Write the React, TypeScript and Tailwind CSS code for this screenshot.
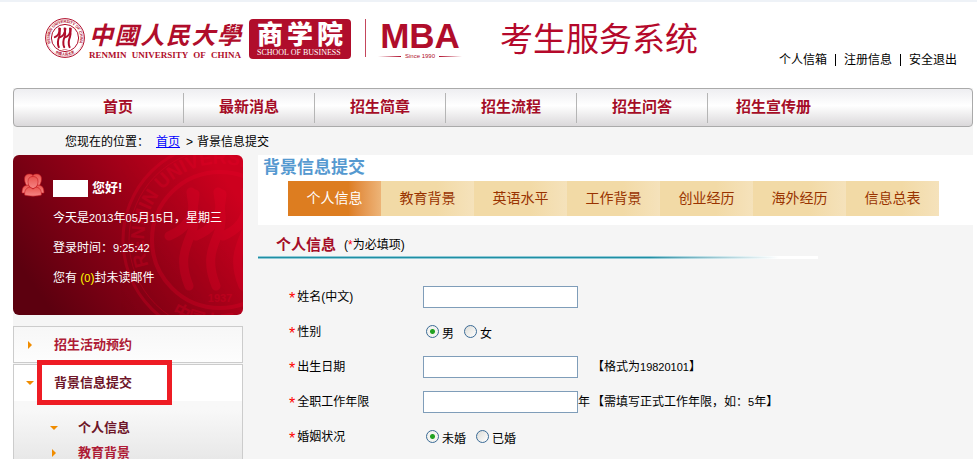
import React from "react";

const navItems = ["首页", "最新消息", "招生简章", "招生流程", "招生问答", "招生宣传册"];

const tabs = [
  "个人信息",
  "教育背景",
  "英语水平",
  "工作背景",
  "创业经历",
  "海外经历",
  "信息总表",
];

// Ring with the three standing figures, shared by the logo and the card
function Seal({ className, id, bold }: { className: string; id: string; bold?: boolean }) {
  const figure = "M-2 -48 C0 -30 4 -20 -2 -6 C-8 8 -14 22 -4 46";
  const arm = "M-24 -4 C-10 -10 0 -18 2 -46";
  return (
    <svg viewBox="-100 -100 200 200" className={className} aria-hidden="true">
      <defs>
        <path id={id + "-top"} d="M-50 57 A76 76 0 1 1 50 57" />
        <path id={id + "-bottom"} d="M-62 62 A88 88 0 0 0 62 62" />
      </defs>
      <g fill="none" stroke="currentColor">
        <circle r="97" strokeWidth={bold ? 5 : 3} />
        <circle r="91" strokeWidth="1" />
        <circle r="68" strokeWidth={bold ? 5 : 4} />
        <g strokeWidth={bold ? 10 : 9} strokeLinecap="round">
          {[-27, 0, 27].map((x) => (
            <g key={x} transform={`translate(${x} 0)`}>
              <path d={figure} />
              <path d={arm} />
            </g>
          ))}
        </g>
      </g>
      <g fill="currentColor" fontFamily="Liberation Sans, sans-serif" fontWeight="bold">
        <text fontSize="19">
          <textPath href={`#${id}-top`} startOffset="50%" textAnchor="middle">
            RENMIN UNIVERSITY OF CHINA
          </textPath>
        </text>
        <text fontSize="11" y="62" textAnchor="middle">
          1937
        </text>
        <text fontSize="17" fontFamily="Noto Sans CJK SC, sans-serif">
          <textPath href={`#${id}-bottom`} startOffset="50%" textAnchor="middle">
            中国人民大学
          </textPath>
        </text>
      </g>
    </svg>
  );
}

function PeopleIcon() {
  return (
    <svg viewBox="0 0 24 24" className="w-6 h-6" aria-hidden="true">
      <defs>
        <linearGradient id="people" x1="0" y1="0" x2="0" y2="1">
          <stop offset="0" stopColor="#e8534e" />
          <stop offset="1" stopColor="#f58585" />
        </linearGradient>
      </defs>
      <g fill="url(#people)" stroke="#c3161c" strokeWidth="0.6">
        <path d="M3.500 6c0-3.500 2-5 5-5s5 2 5 5-2 6-4 7H6c-1-1-2.500-4-2.500-7z" />
        <path d="M20.500 6c0-3.500-2-5-5-5s-5 2-5 5 2 6 4 7H18c1-1 2.500-4 2.500-7z" />
        <path d="M1 20c0-6 2-8 7-8l3 8zM23 20c0-6-2-8-7-8l-3 8z" />
        <path d="M7 8.500C7 5 9 3.500 12 3.500s5 1.500 5 5-2 7-5 7-5-3.500-5-7z" />
        <path d="M3.500 22c0-5 2-7.500 5.500-8l3 2 3-2c3.500 .5 5.500 3 5.500 8-4 1.500-13 1.500-17 0z" />
      </g>
    </svg>
  );
}

function Arrow({ open }: { open?: boolean }) {
  return (
    <svg viewBox="0 0 8 8" className="w-2 h-2 shrink-0" fill="#f08c00" aria-hidden="true">
      {open ? <path d="M0 2h8L4 6z" /> : <path d="M2 0v8l4-4z" />}
    </svg>
  );
}

// Latin digits set a size down so they sit at half the width of a hanzi
function Num({ children }: { children: React.ReactNode }) {
  return <span className="text-[11px]">{children}</span>;
}

function Header() {
  return (
    <header className="flex shrink-0 h-[86px] pl-8 pr-4">
      <div className="flex items-start pt-4 text-[#b00d2b]">
        <Seal id="logo" bold className="w-10 h-10" />
        <div className="w-[152px] ml-1">
          <div className="flex justify-between font-['Noto_Sans_CJK_TC','Noto_Sans_CJK_SC',sans-serif] text-[24px] leading-[32px] font-bold italic">
            {"中國人民大學".split("").map((c) => (
              <span key={c}>{c}</span>
            ))}
          </div>
          <div className="flex justify-between font-['Liberation_Serif',serif] text-[9px] leading-[10px] font-bold">
            <span>RENMIN</span>
            <span>UNIVERSITY</span>
            <span>OF</span>
            <span>CHINA</span>
          </div>
        </div>
        <div className="w-[102px] h-10 ml-2 mt-[1px] px-2 pt-[2px] rounded-sm bg-[#b00d2b] text-white">
          <div className="flex justify-between text-[26px] leading-7 font-black">
            <span>商</span>
            <span>学</span>
            <span>院</span>
          </div>
          <p className="font-['Liberation_Serif',serif] text-[8px] leading-2 whitespace-nowrap">
            SCHOOL OF BUSINESS
          </p>
        </div>
        <div className="w-px h-[38px] ml-[14px] mt-[1px] bg-[#c4465c]" />
        <div className="ml-3 mt-[2px] w-[84px] font-['Liberation_Sans',sans-serif]">
          <div className="text-center text-[35px] leading-8 font-bold">MBA</div>
          <div className="flex items-center gap-1 text-[6px] leading-2">
            <span className="flex-1 h-px bg-gradient-to-r from-transparent to-[#b00d2b]" />
            <span>Since 1990</span>
            <span className="flex-1 h-px bg-gradient-to-l from-transparent to-[#b00d2b]" />
          </div>
        </div>
      </div>
      <h1 className="ml-[38px] pt-[18px] text-[33px] leading-10 text-[#b5092b] whitespace-nowrap">
        考生服务系统
      </h1>
      <div className="flex items-center gap-2 h-6 mt-[46px] ml-auto whitespace-nowrap">
        <a href="#mail">个人信箱</a>
        <span className="w-px h-3 bg-black" />
        <a href="#register">注册信息</a>
        <span className="w-px h-3 bg-black" />
        <a href="#logout">安全退出</a>
      </div>
    </header>
  );
}

function Nav() {
  return (
    <nav className="flex items-center shrink-0 h-[39px] pl-[39px] border border-[#aaa] rounded bg-gradient-to-b from-[#eeeef1] via-white via-45% to-[#dad8da]">
      {navItems.map((item, i) => (
        <a
          key={item}
          href="#nav"
          className={
            "w-[131px] h-[30px] text-center text-[15px] leading-7 font-bold text-[#a50d27] " +
            (i < navItems.length - 1 ? "border-r border-[#b5b5b5]" : "")
          }
        >
          {item}
        </a>
      ))}
    </nav>
  );
}

function UserCard() {
  return (
    <section className="relative h-40 overflow-hidden rounded-md bg-[linear-gradient(55deg,#5c000f_12%,#900016_50%,#cd001f_90%)] text-white">
      <Seal
        id="mark"
        className="absolute left-[107px] -top-[15px] w-[200px] h-[200px] text-[#f0002a] opacity-25"
      />
      <div className="relative flex pl-2 pt-[18px]">
        <PeopleIcon />
        <div className="ml-2 leading-[30px]">
          <p className="flex items-center gap-1 text-[13px] font-bold">
            <span className="w-[35px] h-[17px] bg-white" />
            您好!
          </p>
          <p>
            今天是<Num>2013</Num>年<Num>05</Num>月<Num>15</Num>日，星期三
          </p>
          <p>
            登录时间：<Num>9:25:42</Num>
          </p>
          <p>
            您有 <span className="text-[#ff0]">(<Num>0</Num>)</span>封未读邮件
          </p>
        </div>
      </div>
    </section>
  );
}

function SideMenu() {
  return (
    <nav className="flex flex-col flex-1 gap-[1px] mt-[11px] text-[13px] font-bold text-[#ae1b36]">
      <a
        href="#booking"
        className="flex items-center gap-5 h-[37px] px-3 border border-[#ccc] bg-gradient-to-b from-[#f7f7f7] to-[#fdfdfd]"
      >
        <Arrow />
        招生活动预约
      </a>
      <div className="flex-1 border border-b-0 border-[#ccc] bg-gradient-to-b from-[#f8f8f8] from-45% to-[#e6e6e6]">
        <a href="#background" className="relative flex items-center gap-5 h-9 px-3 bg-white text-[#6e1629]">
          <Arrow open />
          背景信息提交
          <span className="absolute left-[23px] -top-[5px] w-[135px] h-[45px] border-[5px] border-[#ee1c24]" />
        </a>
        <div className="pt-[14px] pl-9 leading-[25px]">
          <a href="#personal" className="flex items-center gap-5 text-[#6e1629]">
            <Arrow open />
            个人信息
          </a>
          <a href="#education" className="flex items-center gap-5">
            <Arrow />
            教育背景
          </a>
        </div>
      </div>
    </nav>
  );
}

function Row({ label, htmlFor, children }: { label: string; htmlFor?: string; children: React.ReactNode }) {
  return (
    <div className="flex items-center h-[35px]">
      <label htmlFor={htmlFor} className="w-[134px] shrink-0">
        <span className="font-['Liberation_Sans',sans-serif] text-base leading-3 align-[-3px] text-[#f00]">*</span>
        <span className="ml-[2px]">{label}</span>
      </label>
      {children}
    </div>
  );
}

function TextInput({ id }: { id: string }) {
  return <input id={id} type="text" className="w-[155px] h-[22px] px-1 border border-[#7f9db9] bg-white" />;
}

function Radio({ name, label, checked }: { name: string; label: string; checked?: boolean }) {
  return (
    <label className="flex items-center gap-[3px]">
      <input
        type="radio"
        name={name}
        defaultChecked={checked}
        className="appearance-none w-[13px] h-[13px] rounded-full border border-[#3a6a96] bg-[linear-gradient(135deg,#dcdcd7,#fff)] checked:bg-[radial-gradient(circle,#21a121_0_2px,#f3f3ef_3px)]"
      />
      <span className="pt-1">{label}</span>
    </label>
  );
}

function InfoForm() {
  return (
    <form>
      <h3 className="flex items-center h-[31px] pl-[18px] pt-2">
        <span className="text-[15px] font-bold text-[#a50d27]">个人信息</span>
        <span className="ml-2">
          (<span className="text-[#f00]">*</span>为必填项)
        </span>
      </h3>
      <div className="w-[560px] bg-gradient-to-r from-[#8ec9d6] from-70% to-white to-93%">
        <div className="h-[3px] py-px">
          <div className="h-px bg-gradient-to-r from-[#1f8fa3] from-70% to-white to-93%" />
        </div>
      </div>
      <div className="pl-[31px] pt-5">
        <Row label="姓名(中文)" htmlFor="name">
          <TextInput id="name" />
        </Row>
        <Row label="性别">
          <div className="flex gap-[10px] pl-[3px]">
            <Radio name="gender" label="男" checked />
            <Radio name="gender" label="女" />
          </div>
        </Row>
        <Row label="出生日期" htmlFor="birth">
          <TextInput id="birth" />
          <span className="ml-[14px]">
            【格式为<Num>19820101</Num>】
          </span>
        </Row>
        <Row label="全职工作年限" htmlFor="years">
          <TextInput id="years" />
          <span>年</span>
          <span className="ml-[2px]">
            【需填写正式工作年限，如：<Num>5</Num>年】
          </span>
        </Row>
        <Row label="婚姻状况">
          <div className="flex gap-[10px] pl-[3px]">
            <Radio name="marriage" label="未婚" checked />
            <Radio name="marriage" label="已婚" />
          </div>
        </Row>
      </div>
    </form>
  );
}

export default function App() {
  return (
    <div className="flex flex-col h-screen overflow-hidden pl-[13px] pr-1 border-t-2 border-[#eef2f7] bg-white font-['Liberation_Sans','Noto_Sans_CJK_SC',sans-serif] text-xs text-black">
      <Header />
      <div className="flex flex-col flex-1 bg-[#f5f5f5]">
        <Nav />
        <div className="flex items-center shrink-0 h-7 pl-[52px] pt-[1px]">
          您现在的位置：
          <a href="#home" className="ml-[7px] mr-1 text-[#00f] underline">
            首页
          </a>
          <span className="mx-[2px]">&gt;</span>
          <span className="ml-[2px]">背景信息提交</span>
        </div>
        <div className="flex flex-1 gap-[15px]">
          <aside className="flex flex-col w-[230px] shrink-0">
            <UserCard />
            <SideMenu />
          </aside>
          <main className="flex-1">
            <div className="h-[70px] bg-white">
              <h2 className="pl-[5px] text-[17px] leading-[26px] font-bold text-[#5599d0]">背景信息提交</h2>
              <div className="flex ml-[30px]">
                {tabs.map((tab, i) => (
                  <a
                    key={tab}
                    href="#tab"
                    className={
                      "w-[93px] h-[35px] text-center text-sm leading-[34px] bg-gradient-to-r " +
                      (i === 0
                        ? "from-[#dd7d20] from-65% to-[#edb477] text-white"
                        : "from-[#f2daa6] from-60% to-[#f5e2bb] text-[#993300]")
                    }
                  >
                    {tab}
                  </a>
                ))}
              </div>
            </div>
            <InfoForm />
          </main>
        </div>
      </div>
    </div>
  );
}
